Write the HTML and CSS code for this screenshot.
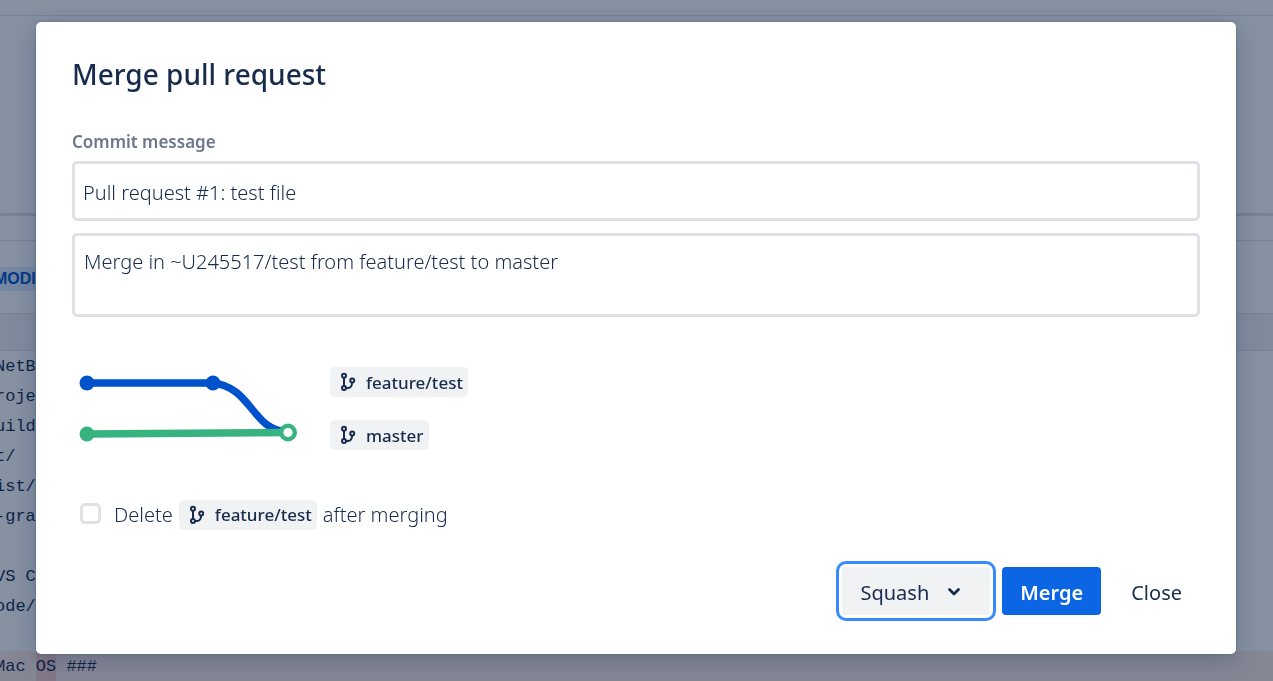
FILE: index.html
```html
<!DOCTYPE html>
<html lang="en">
<head>
  <meta charset="UTF-8">
  <meta name="viewport" content="width=device-width, initial-scale=1.0">
  <title>Merge pull request</title>
  <link rel="stylesheet" href="styles.css">
</head>
<body>
  <!-- Pull request page behind the dialog -->
  <div class="page">
    <div class="topbar"></div>
    <div class="summary"></div>
    <div class="tabs"></div>
    <div class="file-header"><span class="lozenge">MODI</span></div>
    <div class="file-toolbar"></div>
    <div class="diff">
      <div class="line">NetB</div>
      <div class="line">roje</div>
      <div class="line">uild</div>
      <div class="line">t/</div>
      <div class="line">ist/</div>
      <div class="line">-gra</div>
      <div class="line"></div>
      <div class="line">VS C</div>
      <div class="line">ode/</div>
      <div class="line"></div>
      <div class="line removed">Mac <mark>OS</mark> ###</div>
    </div>
  </div>

  <svg class="defs" width="0" height="0" aria-hidden="true">
    <symbol id="branch" viewBox="0 0 16 20">
      <g fill="none" stroke="currentColor" stroke-width="2">
        <circle cx="4" cy="3.7" r="2"/>
        <circle cx="4" cy="16" r="2"/>
        <circle cx="12.2" cy="8.5" r="2"/>
        <path d="M4 5.700v8.300M6 16h2c3 0 4-2 4.100-5.500"/>
      </g>
    </symbol>
  </svg>

  <div class="blanket">
    <form class="dialog" role="dialog" aria-labelledby="dialog-title">
      <h1 id="dialog-title">Merge pull request</h1>

      <label class="field-label" for="commit-title">Commit message</label>
      <input class="field" type="text" id="commit-title" value="Pull request #1: test file">
      <textarea class="field" id="commit-body" aria-label="Commit message body">Merge in ~U245517/test from feature/test to master</textarea>

      <div class="diagram">
        <svg class="graph" width="226" height="90" viewBox="0 0 226 90" aria-hidden="true">
          <g fill="none" stroke-width="7.500">
            <path stroke="#0052cc" d="M7 20H133C172 24 172 68 208 69"/>
            <path stroke="#36b37e" d="M7 71L208 69.500"/>
          </g>
          <circle cx="7" cy="20" r="7.500" fill="#0052cc"/>
          <circle cx="133" cy="20" r="7.500" fill="#0052cc"/>
          <circle cx="7" cy="71" r="7.500" fill="#36b37e"/>
          <circle cx="208" cy="69.500" r="6.800" fill="#fff" stroke="#36b37e" stroke-width="4.400"/>
        </svg>
        <div class="branches">
          <span class="branch"><svg class="icon"><use href="#branch"/></svg>feature/test</span>
          <span class="branch"><svg class="icon"><use href="#branch"/></svg>master</span>
        </div>
      </div>

      <div class="delete-row">
        <input type="checkbox" id="delete-branch">
        <label for="delete-branch">Delete <span class="branch"><svg class="icon"><use href="#branch"/></svg>feature/test</span> after merging</label>
      </div>

      <div class="actions">
        <button type="button" class="btn strategy" aria-haspopup="true">Squash
          <svg class="chevron" width="14" height="10" viewBox="0 0 14 10" aria-hidden="true"><path d="M2.500 2.500L7 7l4.500-4.500" fill="none" stroke="currentColor" stroke-width="2.800" stroke-linecap="round" stroke-linejoin="round"/></svg>
        </button>
        <button type="submit" class="btn primary">Merge</button>
        <button type="button" class="btn subtle">Close</button>
      </div>
    </form>
  </div>
</body>
</html>
```
FILE: styles.css
```css
* {
  box-sizing: border-box;
}
body {
  margin: 0;
  background: #fff;
  color: #172b4d;
  font-family: "Noto Sans", "Open Sans", sans-serif;
  font-size: 20px;
  overflow: hidden;
}

/* Page behind the dialog */
.topbar {
  height: 16px;
  border-bottom: 1px solid #dfe1e6;
}
.summary {
  height: 200px;
  border-bottom: 3px solid #dfe1e6;
}
.tabs {
  height: 25px;
  border-bottom: 1px solid #dfe1e6;
}
.file-header {
  display: flex;
  align-items: center;
  height: 73px;
  padding-top: 3px;
  border-bottom: 1px solid #dfe1e6;
}
.lozenge {
  margin-left: -6px;
  padding-right: 6px;
  background: #deebff;
  color: #0052cc;
  font-family: "Liberation Sans", sans-serif;
  font-size: 16px;
  font-weight: 700;
  line-height: 24px;
}
.file-toolbar {
  height: 37px;
  background: #f4f5f7;
  border-bottom: 1px solid #dfe1e6;
}
.diff {
  font-family: "Liberation Mono", monospace;
  font-size: 17px;
}
.line {
  height: 30px;
  line-height: 32px;
  text-indent: -5px;
  white-space: pre;
}
.removed {
  background: #ffebe6;
}
.removed mark {
  display: inline-block;
  background: #fcd0ce;
  color: inherit;
  text-indent: 0;
}

/* Dialog */
.blanket {
  position: fixed;
  inset: 0;
  padding: 22px 36px;
  background: rgba(9, 30, 66, 0.49);
}
.dialog {
  max-width: 1200px;
  padding: 31px 36px 39px;
  background: #fff;
  border-radius: 5px;
  box-shadow: 0 6px 24px rgba(9, 30, 66, 0.25), 0 0 2px rgba(9, 30, 66, 0.3);
}
h1 {
  margin: 0 0 35px;
  font-size: 28px;
  font-weight: 500;
  line-height: 42px;
}
.field-label {
  display: block;
  margin-bottom: 7px;
  color: #6b778c;
  font-size: 17px;
  font-weight: 600;
  line-height: 24px;
}
.field {
  display: block;
  width: 100%;
  border: 3px solid #dfe1e6;
  border-radius: 5px;
  background: #fff;
  color: #172b4d;
  font: inherit;
  font-weight: 300;
}
input.field {
  height: 60px;
  margin-bottom: 12px;
  padding: 2px 8px 0;
}
textarea.field {
  height: 84px;
  padding: 11px 9px;
  line-height: 30px;
  resize: none;
}
.diagram {
  display: flex;
  gap: 24px;
  padding: 46px 8px 0;
}
.graph {
  overflow: visible;
}
.branches {
  display: flex;
  flex-direction: column;
  align-items: flex-start;
  gap: 23px;
  padding-top: 4px;
}
.branch {
  display: inline-flex;
  align-items: center;
  gap: 10px;
  height: 30px;
  padding: 0 5px 0 10px;
  background: #f1f2f4;
  border-radius: 5px;
  font-size: 17px;
  font-weight: 500;
}
.icon {
  width: 16px;
  height: 20px;
}
.delete-row {
  display: flex;
  align-items: flex-start;
  gap: 13px;
  height: 30px;
  margin: 47px 0 31px;
  padding-left: 8px;
  font-weight: 300;
}
.delete-row label {
  display: flex;
  align-items: center;
  gap: 6px;
  line-height: 28px;
}
.delete-row input {
  appearance: none;
  width: 21px;
  height: 21px;
  margin: 3px 0 0;
  border: 3px solid #dfe1e6;
  border-radius: 5px;
  background: #fff;
}
.actions {
  display: flex;
  justify-content: flex-end;
  align-items: center;
  gap: 12px;
  padding-top: 6px;
}
.btn {
  height: 48px;
  padding: 2px 18px 0;
  border: none;
  border-radius: 4px;
  color: #172b4d;
  font: inherit;
  font-weight: 400;
}
.strategy {
  display: flex;
  align-items: center;
  gap: 18px;
  padding-right: 29px;
  background: #f1f2f4;
  outline: 3px solid #388bff;
  outline-offset: 3px;
}
.primary {
  background: #0c66e4;
  color: #fff;
  font-weight: 600;
}
.subtle {
  background: transparent;
}
```
